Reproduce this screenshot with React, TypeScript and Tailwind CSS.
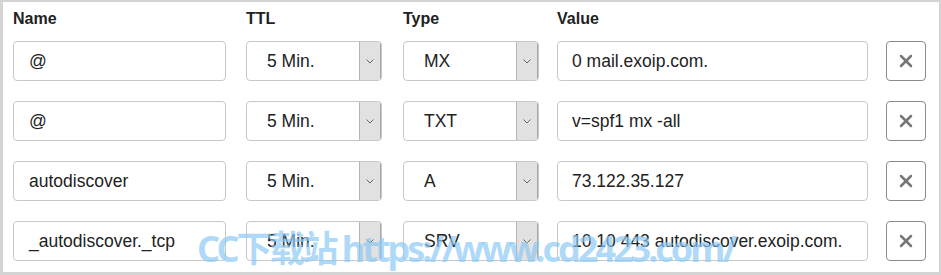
import { X } from "lucide-react";

type Rec = { name: string; ttl: string; type: string; value: string };

const records: Rec[] = [
  { name: "@", ttl: "5 Min.", type: "MX", value: "0 mail.exoip.com." },
  { name: "@", ttl: "5 Min.", type: "TXT", value: "v=spf1 mx -all" },
  { name: "autodiscover", ttl: "5 Min.", type: "A", value: "73.122.35.127" },
  {
    name: "_autodiscover._tcp",
    ttl: "5 Min.",
    type: "SRV",
    value: "10 10 443 autodiscover.exoip.com.",
  },
];

const grid = "grid grid-cols-[233px_157px_154px_329px_40px]";

function Select({ label }: { label: string }) {
  return (
    <div className="flex h-10 w-[136px] overflow-hidden rounded-[4px] border border-[#c8c8c8] bg-white">
      <div className="flex flex-1 items-center pl-5 text-[17.5px] text-[#222]">
        {label}
      </div>
      <div className="flex w-[22px] items-center justify-center border-l border-[#b5b5b5] border-r border-r-[#a8a8a8] bg-[#e1e1e1]">
        <svg width="8" height="5" viewBox="0 0 8 5" fill="none">
          <path d="M0.5 0.5L4 4L7.5 0.5" stroke="#666" strokeWidth="1" />
        </svg>
      </div>
    </div>
  );
}

export default function App() {
  return (
    <div
      className="relative h-[275px] w-[941px] overflow-hidden border-2 border-l-[3px] border-b-[3px] border-[#d4d4d4] bg-white pl-[10px] pt-[8px]"
      style={{ fontFamily: '"Liberation Sans", Arial, sans-serif' }}
    >
      {/* Header */}
      <div className={`${grid} text-[16px] font-bold leading-[18px] text-[#222]`}>
        <div>Name</div>
        <div>TTL</div>
        <div>Type</div>
        <div>Value</div>
        <div />
      </div>

      {/* Rows */}
      <div className="mt-[13px] flex flex-col gap-5">
        {records.map((r, i) => (
          <div key={i} className={`${grid} items-center`}>
            <div className="flex h-10 w-[213px] items-center rounded-[4px] border border-[#c8c8c8] pl-[15px] text-[17.5px] text-[#222]">
              {r.name}
            </div>
            <Select label={r.ttl} />
            <Select label={r.type} />
            <div className="flex h-10 w-[311px] items-center whitespace-nowrap rounded-[4px] border border-[#c8c8c8] pl-[14px] text-[17.5px] text-[#222]">
              {r.value}
            </div>
            <button className="flex h-10 w-10 items-center justify-center rounded-[4px] border border-[#8c8c8c] bg-white">
              <X className="h-[20px] w-[20px] text-[#777]" strokeWidth={3} />
            </button>
          </div>
        ))}
      </div>

      {/* Watermark */}
      <div
        className="pointer-events-none absolute left-[194px] top-[224px] whitespace-nowrap text-[36px] font-bold leading-[46px] tracking-[-3px] text-[#8cc8f5]/70"
        style={{ fontFamily: '"Noto Sans", "Noto Sans CJK SC", sans-serif' }}
      >
        CC下载站 https://www.cd2423.com/
      </div>
    </div>
  );
}
